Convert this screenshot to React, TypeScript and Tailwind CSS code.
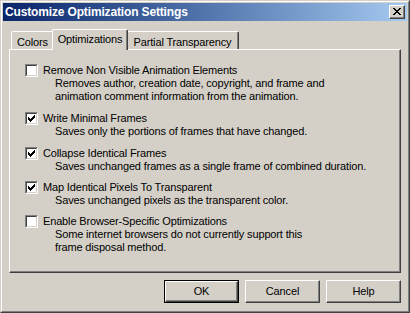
const font = { fontFamily: '"Liberation Sans", Arial, sans-serif' }

const options = [
  {
    label: 'Remove Non Visible Animation Elements',
    lines: ['Removes author, creation date, copyright, and frame and', 'animation comment information from the animation.'],
    checked: false,
    gap: 'mt-0',
  },
  { label: 'Write Minimal Frames', lines: ['Saves only the portions of frames that have changed.'], checked: true, gap: 'mt-[9px]' },
  { label: 'Collapse Identical Frames', lines: ['Saves unchanged frames as a single frame of combined duration.'], checked: true, gap: 'mt-[9px]' },
  { label: 'Map Identical Pixels To Transparent', lines: ['Saves unchanged pixels as the transparent color.'], checked: true, gap: 'mt-[8px]' },
  {
    label: 'Enable Browser-Specific Optimizations',
    lines: ['Some internet browsers do not currently support this', 'frame disposal method.'],
    checked: false,
    gap: 'mt-[8px]',
  },
]

function CloseGlyph() {
  // classic 8x7 close "x"
  const rows = ['XX....XX', '.XX..XX.', '..XXXX..', '...XX...', '..XXXX..', '.XX..XX.', 'XX....XX']
  return (
    <svg width="8" height="7" viewBox="0 0 8 7" shapeRendering="crispEdges">
      {rows.map((r, y) =>
        r.split('').map((c, x) => (c === 'X' ? <rect key={`${x}-${y}`} x={x} y={y} width="1" height="1" fill="#000" /> : null)),
      )}
    </svg>
  )
}

function CheckGlyph() {
  const rows = ['......X', '.....XX', 'X...XXX', 'XX.XXX.', 'XXXXX..', '.XXX...', '..X....']
  return (
    <svg width="7" height="7" viewBox="0 0 7 7" shapeRendering="crispEdges">
      {rows.map((r, y) =>
        r.split('').map((c, x) => (c === 'X' ? <rect key={`${x}-${y}`} x={x} y={y} width="1" height="1" fill="#000" /> : null)),
      )}
    </svg>
  )
}

function Checkbox({ checked }: { checked: boolean }) {
  return (
    <div className="w-[13px] h-[13px] shrink-0 border border-t-[#808080] border-l-[#808080] border-r-white border-b-white">
      <div className="w-full h-full bg-white border border-t-[#404040] border-l-[#404040] border-r-[#d4d0c8] border-b-[#d4d0c8] pl-px pt-px">
        {checked && <CheckGlyph />}
      </div>
    </div>
  )
}

function Button({ children, isDefault }: { children: string; isDefault?: boolean }) {
  if (isDefault) {
    return (
      <div className="w-[75px] h-[23px] border border-black">
        <div className="w-full h-full flex items-center justify-center border border-t-white border-l-white border-r-[#404040] border-b-[#404040] shadow-[inset_-1px_-1px_0_#808080] text-[11px] tracking-[-0.15px]">
          {children}
        </div>
      </div>
    )
  }
  return (
    <div className="w-[75px] h-[23px] flex items-center justify-center border border-t-white border-l-white border-r-[#404040] border-b-[#404040] shadow-[inset_-1px_-1px_0_#808080] text-[11px] tracking-[-0.15px]">
      {children}
    </div>
  )
}

function Tab({ label, width, selected }: { label: string; width: string; selected?: boolean }) {
  if (selected) {
    return (
      <div
        className={`${width} h-[21px] -mx-[2px] -mb-px relative z-10 bg-[#d4d0c8] border-l border-t border-white border-r border-r-[#404040] rounded-tr-[2px] rounded-tl-[2px] shadow-[inset_-1px_0_0_#808080] flex justify-center pt-[1px] text-[11px] tracking-[-0.15px]`}
      >
        {label}
      </div>
    )
  }
  return (
    <div
      className={`${width} h-[18px] border-l border-t border-white border-r border-r-[#404040] rounded-tr-[2px] rounded-tl-[2px] shadow-[inset_-1px_0_0_#808080] flex justify-center pt-[2px] text-[11px] tracking-[-0.15px]`}
    >
      {label}
    </div>
  )
}

export default function App() {
  return (
    <div className="w-[410px] h-[313px] bg-[#d4d0c8] text-black border border-t-[#d4d0c8] border-l-[#d4d0c8] border-r-[#404040] border-b-[#404040]" style={font}>
      <div className="w-full h-full p-px border border-t-white border-l-white border-r-[#808080] border-b-[#808080] flex flex-col">
        {/* Title bar */}
        <div className="h-[18px] shrink-0 flex items-center justify-between bg-gradient-to-r from-[#0a246a] to-[#a6caf0] pl-[2px] pr-[2px]">
          <span className="text-white font-bold text-[12px] tracking-[-0.15px] leading-none">Customize Optimization Settings</span>
          <div className="w-[16px] h-[14px] bg-[#d4d0c8] border border-t-white border-l-white border-r-[#404040] border-b-[#404040] shadow-[inset_-1px_-1px_0_#808080] pl-[3px] pt-[2px]">
            <CloseGlyph />
          </div>
        </div>

        {/* Tabs + panel */}
        <div className="mt-[8px] px-[6px]">
          <div className="flex items-end h-[20px] pl-[2px]">
            <Tab label="Colors" width="w-[43px]" />
            <Tab label="Optimizations" width="w-[76px]" selected />
            <Tab label="Partial Transparency" width="w-[113px]" />
          </div>
          <div className="h-[224px] border border-t-white border-l-white border-r-[#404040] border-b-[#404040] shadow-[inset_-1px_-1px_0_#808080] pl-[15px] pt-[14px]">
            {options.map((o) => (
              <div key={o.label} className={`flex gap-[5px] ${o.gap}`}>
                <Checkbox checked={o.checked} />
                <div className="text-[11px] leading-[13px] tracking-[-0.15px]">
                  <div>{o.label}</div>
                  {o.lines.map((l) => (
                    <div key={l} className="pl-[12px] whitespace-nowrap">
                      {l}
                    </div>
                  ))}
                </div>
              </div>
            ))}
          </div>
        </div>

        {/* Buttons */}
        <div className="mt-[7px] px-[6px] flex justify-end gap-[6px]">
          <Button isDefault>OK</Button>
          <Button>Cancel</Button>
          <Button>Help</Button>
        </div>
      </div>
    </div>
  )
}
